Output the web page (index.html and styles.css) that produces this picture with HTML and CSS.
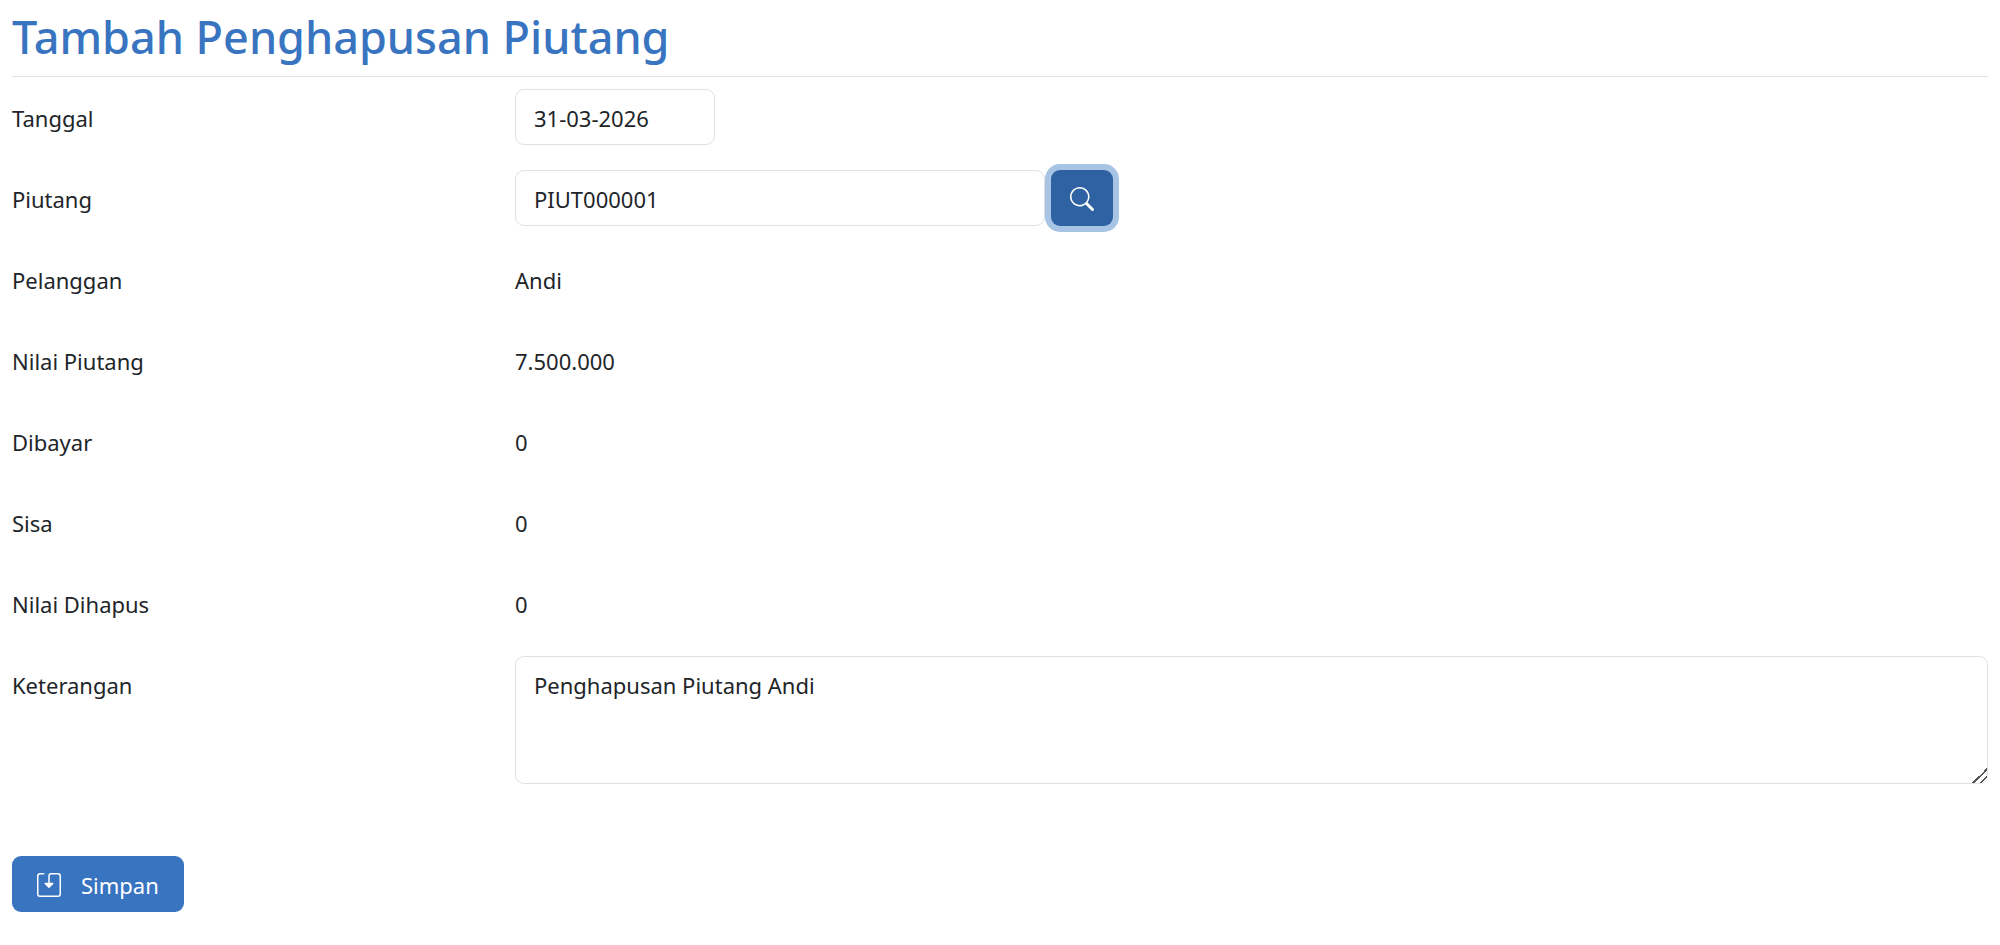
FILE: index.html
```html
<!DOCTYPE html>
<html lang="id">
<head>
    <meta charset="UTF-8">
    <title>Tambah Penghapusan Piutang</title>
    <meta name="viewport" content="width=device-width, initial-scale=1.0">
    <link rel="stylesheet" href="styles.css">
</head>
<body>
<div class="container">
    <h1>Tambah Penghapusan Piutang</h1>
    <form>
        <div class="row">
            <label for="tanggal">Tanggal</label>
            <input type="text" id="tanggal" class="form-control tanggal" value="31-03-2026">
        </div>
        <div class="row">
            <label for="piutang">Piutang</label>
            <div class="search-group">
                <input type="text" id="piutang" class="form-control" value="PIUT000001">
                <button type="button" class="button search" aria-label="Cari piutang">
                    <svg class="icon" viewBox="0 0 16 16" fill="currentColor"><path d="M11.742 10.344a6.5 6.5 0 1 0-1.397 1.398h-.001q.044.06.098.115l3.85 3.85a1 1 0 0 0 1.415-1.414l-3.85-3.85a1 1 0 0 0-.115-.1zM12 6.5a5.5 5.5 0 1 1-11 0 5.5 5.5 0 0 1 11 0"/></svg>
                </button>
            </div>
        </div>
        <div class="row">
            <label for="pelanggan">Pelanggan</label>
            <output id="pelanggan">Andi</output>
        </div>
        <div class="row">
            <label for="nilai_piutang">Nilai Piutang</label>
            <output id="nilai_piutang">7.500.000</output>
        </div>
        <div class="row">
            <label for="dibayar">Dibayar</label>
            <output id="dibayar">0</output>
        </div>
        <div class="row">
            <label for="sisa">Sisa</label>
            <output id="sisa">0</output>
        </div>
        <div class="row">
            <label for="nilai_dihapus">Nilai Dihapus</label>
            <output id="nilai_dihapus">0</output>
        </div>
        <div class="row">
            <label for="keterangan">Keterangan</label>
            <textarea id="keterangan" class="form-control" rows="3">Penghapusan Piutang Andi</textarea>
        </div>
        <button type="submit" class="button save">
            <svg class="icon" viewBox="0 0 16 16" fill="currentColor"><path d="M2 1a1 1 0 0 0-1 1v12a1 1 0 0 0 1 1h12a1 1 0 0 0 1-1V2a1 1 0 0 0-1-1H9.5a1 1 0 0 0-1 1v4.5h2a.5.5 0 0 1 .354.854l-2.5 2.5a.5.5 0 0 1-.708 0l-2.5-2.5A.5.5 0 0 1 5.5 6.5h2V2a2 2 0 0 1 2-2H14a2 2 0 0 1 2 2v12a2 2 0 0 1-2 2H2a2 2 0 0 1-2-2V2a2 2 0 0 1 2-2h2.5a.5.5 0 0 1 0 1z"/></svg>
            Simpan
        </button>
    </form>
</div>
</body>
</html>
```
FILE: styles.css
```css
* {
    box-sizing: border-box;
}
body {
    margin: 0;
    font-family: 'Segoe UI', 'Noto Sans', sans-serif;
    font-size: 22px;
    line-height: 36px;
    color: #212529;
    background-color: #ffffff;
}
.container {
    padding: 8px 12px;
}
h1 {
    margin: 0 0 12px;
    padding-bottom: 10px;
    border-bottom: 1px solid #dee2e6;
    font-size: 45px;
    font-weight: 500;
    line-height: 58px;
    color: #3874c0;
}
.row {
    display: grid;
    grid-template-columns: calc(25% - 27px) 1fr;
    column-gap: 36px;
    align-items: start;
    margin-bottom: 25px;
}
label, output {
    padding: 11px 0 9px;
}
.form-control {
    display: block;
    width: 100%;
    padding: 10px 18px 8px;
    border: 1px solid #dee2e6;
    border-radius: 9px;
    background-color: #ffffff;
    font: inherit;
    color: inherit;
}
.form-control:focus {
    outline: none;
    border-color: #3874c0;
}
.tanggal {
    max-width: 200px;
}
textarea.form-control {
    height: 128px;
    resize: vertical;
}
textarea::-webkit-resizer {
    background: linear-gradient(135deg, transparent 50%, #555555 50%, #555555 57%, transparent 57%, transparent 75%, #555555 75%, #555555 82%, transparent 82%);
}
.search-group {
    display: flex;
    gap: 6px;
    max-width: 598px;
}
.button {
    display: flex;
    align-items: center;
    height: 56px;
    padding: 2px 25px 0;
    border: none;
    border-radius: 9px;
    background-color: #3874c0;
    font: inherit;
    color: #ffffff;
    cursor: pointer;
}
.button:hover, .button.search {
    background-color: #2f62a3;
}
.search {
    flex: none;
    justify-content: center;
    width: 62px;
    padding: 2px 0 0;
    box-shadow: 0 0 0 6px #a7c4e5;
}
.save {
    gap: 20px;
    margin-top: 72px;
}
.icon {
    flex: none;
    width: 24px;
    height: 24px;
}
@media (max-width: 600px) {
    .row {
        grid-template-columns: 1fr;
    }
}
```
